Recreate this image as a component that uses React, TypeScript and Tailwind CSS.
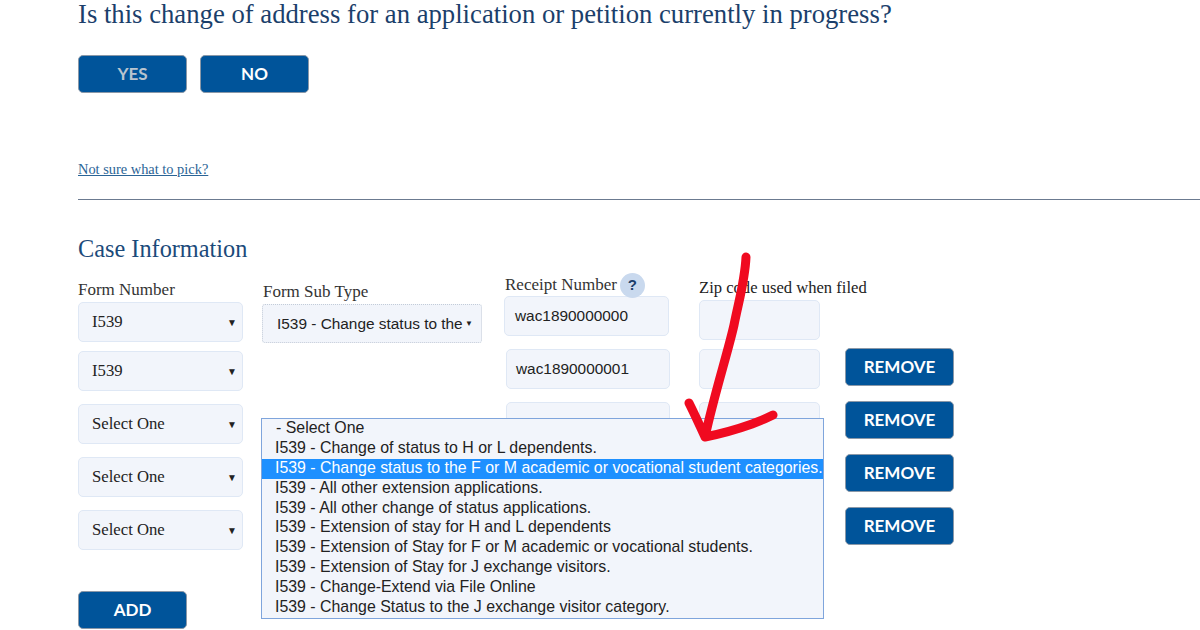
const serif = "font-['Liberation_Serif',serif]";
const sans = "font-['Liberation_Sans',sans-serif]";

const options = [
  '- Select One',
  'I539 - Change of status to H or L dependents.',
  'I539 - Change status to the F or M academic or vocational student categories.',
  'I539 - All other extension applications.',
  'I539 - All other change of status applications.',
  'I539 - Extension of stay for H and L dependents',
  'I539 - Extension of Stay for F or M academic or vocational students.',
  'I539 - Extension of Stay for J exchange visitors.',
  'I539 - Change-Extend via File Online',
  'I539 - Change Status to the J exchange visitor category.',
];

function Btn({ label, className = '', color = 'text-white' }: { label: string; className?: string; color?: string }) {
  return (
    <button className={`flex h-[38px] w-[109px] items-center justify-center rounded-[5px] border border-[#8a98a8] bg-[#00549a] font-['Lato',sans-serif] text-[17px] font-bold ${color} ${className}`}>
      {label}
    </button>
  );
}

function FormSelect({ value, className = '' }: { value: string; className?: string }) {
  return (
    <div className={`flex h-[40px] w-[165px] items-center rounded-[5px] border border-[#dfe8f5] bg-[#f2f5fb] pl-[13px] pr-[5px] ${serif} text-[16.7px] text-[#222] ${className}`}>
      <span className="flex-1">{value}</span>
      <span className="text-[10px] text-[#222]">▼</span>
    </div>
  );
}

function Field({ value = '', className = '' }: { value?: string; className?: string }) {
  return (
    <div className={`flex h-[40px] items-center rounded-[5px] border border-[#dfe8f5] bg-[#f2f5fb] pl-[10px] ${sans} text-[15.4px] text-[#222] ${className}`}>
      {value}
    </div>
  );
}

export default function App() {
  return (
    <div className="relative h-[630px] w-[1200px] overflow-hidden bg-white pl-[78px]">
      <h1 className={`h-[55px] ${serif} text-[26.7px] leading-[28px] whitespace-nowrap text-[#1b3f6b]`}>
        Is this change of address for an application or petition currently in progress?
      </h1>

      <div className="flex gap-[13px]">
        <Btn label="YES" color="text-[#b9c4cf]" />
        <Btn label="NO" />
      </div>

      <a className={`mt-[68px] block h-[16px] text-[14.4px] leading-[16px] underline ${serif} text-[#2a6496]`}>
        Not sure what to pick?
      </a>

      <div className="mt-[22px] h-px bg-[#6b7a90]" />

      <h2 className={`mt-[36px] h-[26px] ${serif} text-[24.3px] leading-[26px] text-[#1b4a7a]`}>Case Information</h2>

      <div className="mt-[14px] flex items-start">
        <div className="w-[165px]">
          <div className={`h-[26px] pt-[4px] ${serif} text-[17px] leading-[20px] text-[#333]`}>Form Number</div>
          <FormSelect value="I539" />
          <FormSelect value="I539" className="mt-[9px]" />
          <FormSelect value="Select One" className="mt-[13px]" />
          <FormSelect value="Select One" className="mt-[13px]" />
          <FormSelect value="Select One" className="mt-[13px]" />
          <Btn label="ADD" className="mt-[41px]" />
        </div>

        <div className="ml-[19px] w-[220px]">
          <div className={`h-[28px] pl-[1px] pt-[6px] ${serif} text-[17px] leading-[20px] text-[#333]`}>Form Sub Type</div>
          <div className={`flex h-[39px] items-center rounded-[3px] border border-dotted border-[#c3ccd8] bg-[#f2f5fb] pl-[14px] pr-[8px] ${sans} text-[15.4px] text-[#222]`}>
            <span className="flex-1 whitespace-nowrap">I539 - Change status to the</span>
            <span className="text-[8px]">▼</span>
          </div>
        </div>

        <div className="ml-[22px] w-[166px]">
          <div className={`flex h-[20px] items-center pl-[1px] ${serif} text-[17px] text-[#333]`}>
            <span className="-mt-[3px]">Receipt Number</span>
            <span className={`-mt-[1px] ml-[3px] flex h-[25px] w-[25px] shrink-0 items-center justify-center rounded-full bg-[#c9d9ee] ${sans} text-[15px] font-bold text-[#1b3f6b]`}>?</span>
          </div>
          <Field value="wac1890000000" className="w-[165px]" />
          <Field value="wac1890000001" className="ml-[2px] mt-[13px] w-[164px] pl-[9px]!" />
          <Field className="ml-[2px] mt-[13px] w-[164px]" />
        </div>

        <div className="ml-[29px] w-[121px]">
          <div className={`h-[24px] pt-[2px] whitespace-nowrap ${serif} text-[16.6px] leading-[20px] text-[#222]`}>Zip code used when filed</div>
          <Field />
          <Field className="mt-[9px]" />
          <Field className="mt-[13px]" />
        </div>

        <div className="ml-[25px] flex w-[109px] flex-col gap-[15px] pt-[72px]">
          <Btn label="REMOVE" />
          <Btn label="REMOVE" />
          <Btn label="REMOVE" />
          <Btn label="REMOVE" />
        </div>
      </div>

      {/* open sub type dropdown */}
      <div className={`absolute left-[261px] top-[418px] w-[563px] border border-[#7fa5dc] bg-[#f2f5fb] ${sans} text-[15.9px] leading-[18px] text-[#222]`}>
        {options.map((o, i) => (
          <div key={o} className={`h-[19.9px] whitespace-nowrap pl-[13px] ${i === 0 ? 'pl-[14px]!' : ''} ${i === 2 ? 'bg-[#1e90ff] text-white' : ''}`}>
            {o}
          </div>
        ))}
      </div>

      {/* hand drawn arrow */}
      <svg className="absolute left-0 top-0 blur-[0.7px]" width="1200" height="630" fill="none">
        <path
          d="M746 257 C745 280 739 300 734 325 C728 352 714 395 705 437 M689 403 C695 415 700 426 705 437 C720 434 738 429 752 424 C760 421 767 418 773 415"
          stroke="#f00a20"
          strokeWidth="9"
          strokeLinecap="round"
          strokeLinejoin="round"
        />
      </svg>
    </div>
  );
}
